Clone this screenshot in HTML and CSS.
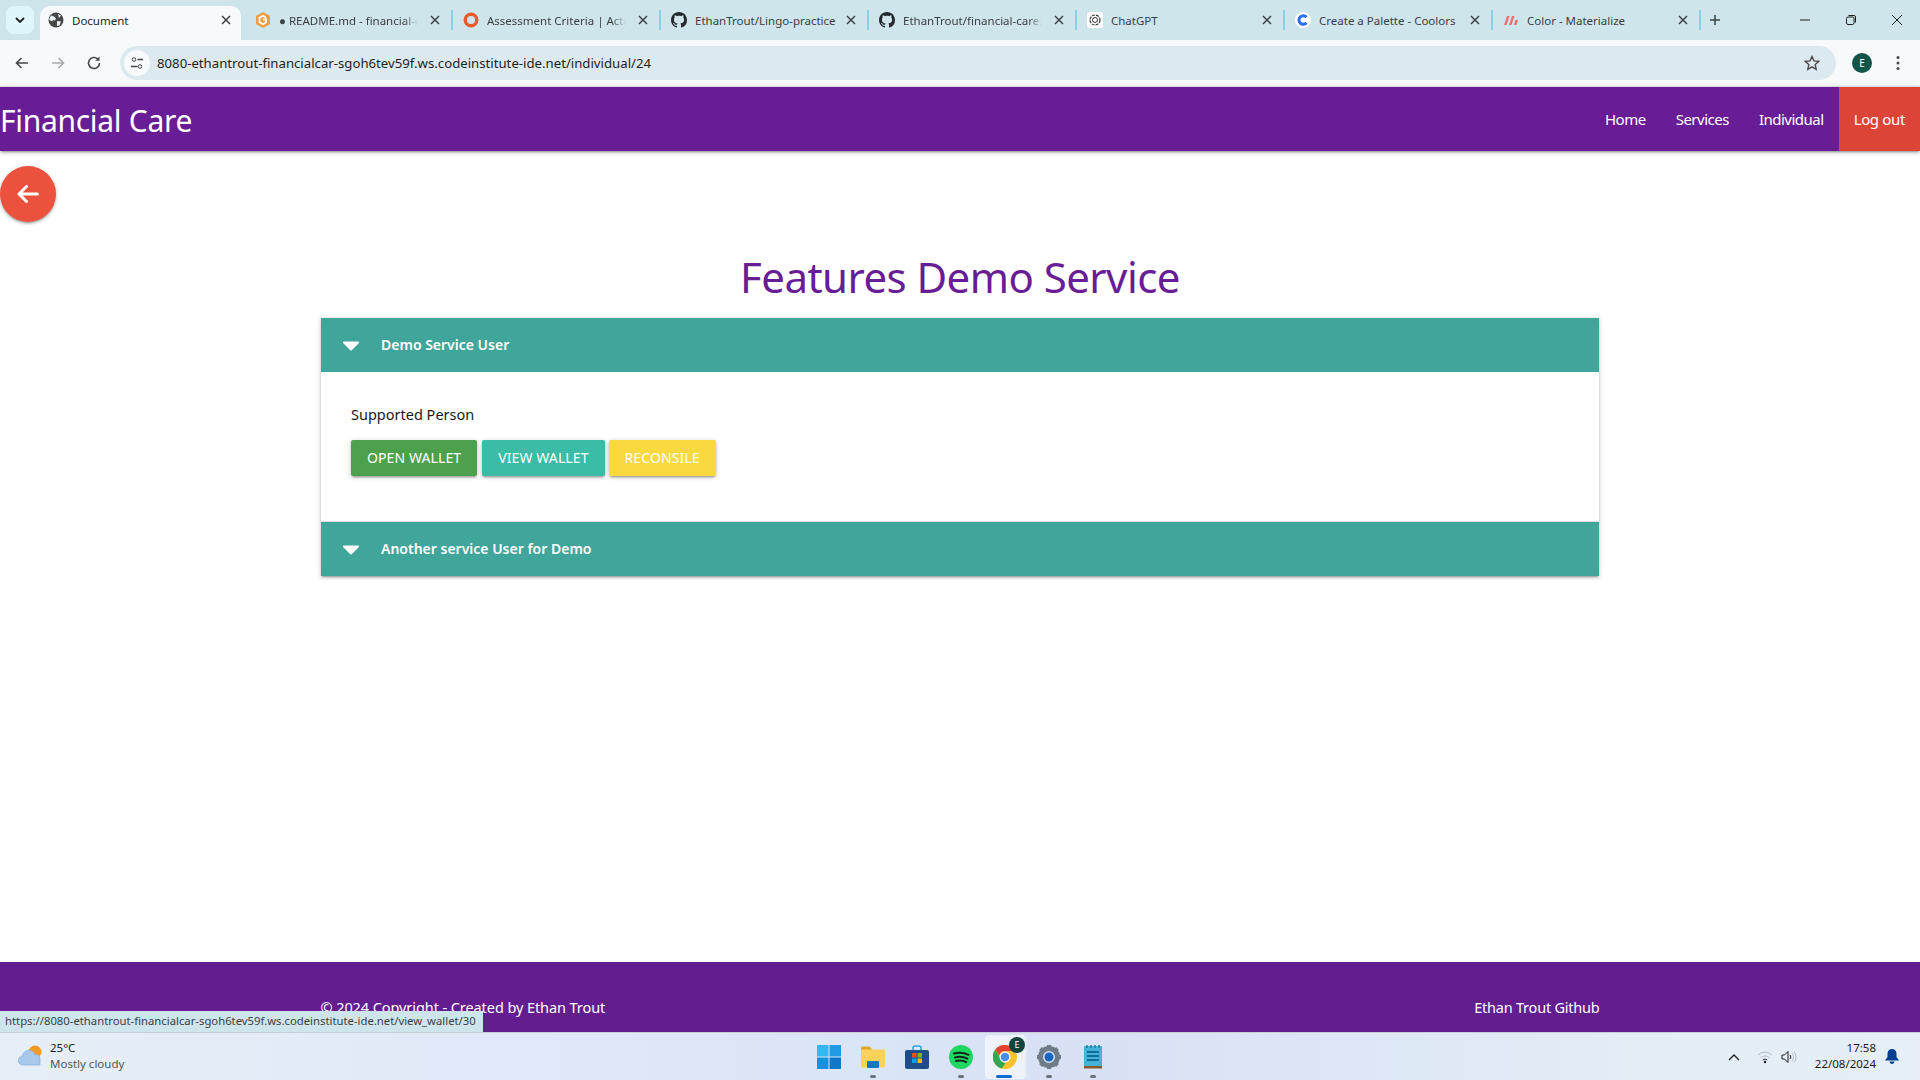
FILE: index.html
```html
<!DOCTYPE html>
<html lang="en">
<head>
  <meta charset="UTF-8" />
  <title>Document</title>
  <link rel="stylesheet" href="styles.css">
</head>
<body>

  <svg class="icon-defs" width="0" height="0">
    <symbol id="github" viewBox="0 0 16 16"><path fill="#24292f" d="M8 0C3.58 0 0 3.58 0 8c0 3.54 2.29 6.53 5.47 7.59.4.07.55-.17.55-.38 0-.19-.01-.82-.01-1.49-2.01.37-2.53-.49-2.69-.94-.09-.23-.48-.94-.82-1.13-.28-.15-.68-.52-.01-.53.63-.01 1.08.58 1.23.82.72 1.21 1.87.87 2.33.66.07-.52.28-.87.51-1.07-1.78-.2-3.64-.89-3.64-3.95 0-.87.31-1.59.82-2.15-.08-.2-.36-1.02.08-2.12 0 0 .67-.21 2.2.82.64-.18 1.32-.27 2-.27.68 0 1.36.09 2 .27 1.53-1.04 2.2-.82 2.2-.82.44 1.1.16 1.92.08 2.12.51.56.82 1.27.82 2.15 0 3.07-1.87 3.75-3.65 3.95.29.25.54.73.54 1.48 0 1.07-.01 1.93-.01 2.2 0 .21.15.46.55.38A8.013 8.013 0 0016 8c0-4.42-3.58-8-8-8z"/></symbol>
    <symbol id="close" viewBox="0 0 10 10"><path d="M1 1l8 8M9 1l-8 8" stroke="#3c4043" stroke-width="1.5" fill="none"/></symbol>
    <symbol id="caret" viewBox="0 0 16 10"><path d="M1 1.500h14L8 8.500z" fill="#fff" stroke="#fff" stroke-width="2" stroke-linejoin="round"/></symbol>
  </svg>

  <!-- Browser tabs -->
  <div class="tab-strip">
    <div class="tab-search"><svg width="10" height="6" viewBox="0 0 10 6"><path d="M1 1l4 4 4-4" stroke="#1f1f1f" stroke-width="1.800" fill="none"/></svg></div>
    <div class="tab tab-active">
      <svg class="tab-icon" viewBox="0 0 16 16"><circle cx="8" cy="8" r="7.500" fill="#444746"/><path d="M3 3.500l3 1 2 2-1 2-2-.5-1 1.500-3-2zM10 2l3 1.500-2 2.500zM9 9l4 .5-1.500 4-2.500.5z" fill="#e8f0f4"/></svg>
      <span class="tab-title">Document</span>
      <svg class="tab-close"><use href="#close"/></svg>
    </div>
    <div class="tab">
      <svg class="tab-icon" viewBox="0 0 16 16"><path d="M8 0l7 4v8l-7 4-7-4V4z" fill="#f29b3f"/><path d="M11 5.500L8 3.800 4.500 5.800v4.400L8 12.200l3-1.800V7.500H8" stroke="#fff" stroke-width="1.800" fill="none"/></svg>
      <span class="tab-title tab-title-cut">● README.md - financial-care</span>
      <svg class="tab-close"><use href="#close"/></svg>
    </div>
    <span class="tab-sep"></span>
    <div class="tab">
      <svg class="tab-icon" viewBox="0 0 16 16"><circle cx="8" cy="8" r="5.800" fill="none" stroke="#ef5a28" stroke-width="3.400"/></svg>
      <span class="tab-title tab-title-cut">Assessment Criteria | Active</span>
      <svg class="tab-close"><use href="#close"/></svg>
    </div>
    <span class="tab-sep"></span>
    <div class="tab">
      <svg class="tab-icon"><use href="#github"/></svg>
      <span class="tab-title">EthanTrout/Lingo-practice</span>
      <svg class="tab-close"><use href="#close"/></svg>
    </div>
    <span class="tab-sep"></span>
    <div class="tab">
      <svg class="tab-icon"><use href="#github"/></svg>
      <span class="tab-title tab-title-cut">EthanTrout/financial-care: A</span>
      <svg class="tab-close"><use href="#close"/></svg>
    </div>
    <span class="tab-sep"></span>
    <div class="tab">
      <svg class="tab-icon" viewBox="0 0 16 16"><rect width="16" height="16" rx="2" fill="#fff"/><circle cx="8" cy="8" r="5" fill="none" stroke="#333" stroke-width="1.200" stroke-dasharray="3 1"/><circle cx="8" cy="8" r="2.500" fill="none" stroke="#333"/></svg>
      <span class="tab-title">ChatGPT</span>
      <svg class="tab-close"><use href="#close"/></svg>
    </div>
    <span class="tab-sep"></span>
    <div class="tab">
      <svg class="tab-icon" viewBox="0 0 16 16"><circle cx="8" cy="8" r="8" fill="#fff"/><path d="M11.500 5.200a4.300 4.300 0 1 0 0 5.600" stroke="#2b6cf0" stroke-width="3" fill="none"/></svg>
      <span class="tab-title">Create a Palette - Coolors</span>
      <svg class="tab-close"><use href="#close"/></svg>
    </div>
    <span class="tab-sep"></span>
    <div class="tab">
      <svg class="tab-icon" viewBox="0 0 16 16"><path d="M1 13L4 4h2.500l-3 9zM6 13l3-9h2.500l-3 9zM11 13l1.500-5H15l-1.500 5z" fill="#ee6e73"/></svg>
      <span class="tab-title">Color - Materialize</span>
      <svg class="tab-close"><use href="#close"/></svg>
    </div>
    <span class="tab-sep"></span>
    <svg class="new-tab" width="12" height="12" viewBox="0 0 12 12"><path d="M6 1v10M1 6h10" stroke="#3c4043" stroke-width="1.500"/></svg>
    <div class="window-controls">
      <svg width="12" height="12" viewBox="0 0 12 12"><path d="M1 6h10" stroke="#1f1f1f"/></svg>
      <svg width="12" height="12" viewBox="0 0 12 12"><rect x="1.500" y="3" width="7.500" height="7.500" rx="1.500" fill="none" stroke="#1f1f1f"/><path d="M3.500 1.500H9A1.500 1.500 0 0 1 10.500 3v5.500" fill="none" stroke="#1f1f1f"/></svg>
      <svg width="12" height="12" viewBox="0 0 12 12"><path d="M1 1l10 10M11 1L1 11" stroke="#1f1f1f"/></svg>
    </div>
  </div>

  <!-- Browser toolbar -->
  <div class="toolbar">
    <svg class="tool" viewBox="0 0 16 16"><path d="M14 8H3M7.500 3L2.500 8l5 5" stroke="#474747" stroke-width="1.600" fill="none"/></svg>
    <svg class="tool" viewBox="0 0 16 16"><path d="M2 8h11M8.500 3l5 5-5 5" stroke="#a9acae" stroke-width="1.600" fill="none"/></svg>
    <svg class="tool" viewBox="0 0 16 16"><path d="M13.500 8A5.500 5.500 0 1 1 11.800 4" stroke="#474747" stroke-width="1.600" fill="none"/><path d="M13.500 1.500v4.200H9.300z" fill="#474747"/></svg>
    <div class="address-bar">
      <span class="site-info"><svg width="14" height="14" viewBox="0 0 14 14"><circle cx="4" cy="3.500" r="1.800" fill="none" stroke="#444"/><path d="M7.500 3.500H13M1 10.500h6.500" stroke="#444" stroke-width="1.300"/><circle cx="10" cy="10.500" r="1.800" fill="none" stroke="#444"/></svg></span>
      <span class="url">8080-ethantrout-financialcar-sgoh6tev59f.ws.codeinstitute-ide.net/individual/24</span>
      <svg class="star" width="16" height="16" viewBox="0 0 16 16"><path d="M8 1.500l2 4.400 4.700.5-3.500 3.200 1 4.700L8 11.900l-4.200 2.400 1-4.700L1.300 6.400 6 5.900z" fill="none" stroke="#474747" stroke-width="1.400"/></svg>
    </div>
    <span class="profile">E</span>
    <svg class="menu-dots" width="4" height="16" viewBox="0 0 4 16"><circle cx="2" cy="2.500" r="1.500" fill="#474747"/><circle cx="2" cy="8" r="1.500" fill="#474747"/><circle cx="2" cy="13.500" r="1.500" fill="#474747"/></svg>
  </div>

  <!-- Navigation Bar -->
  <nav class="site-nav">
    <a href="#" class="brand">Financial Care</a>
    <ul class="nav-links">
      <li><a href="#">Home</a></li>
      <li><a href="#">Services</a></li>
      <li><a href="#">Individual</a></li>
      <li><a href="#" class="logout">Log out</a></li>
    </ul>
  </nav>

  <main class="page">
    <a href="#" class="back-btn">
      <svg width="22" height="18" viewBox="0 0 22 18"><path d="M20.500 9H2M9.500 1.500L2 9l7.500 7.500" stroke="#fff" stroke-width="3" stroke-linecap="round" stroke-linejoin="round" fill="none"/></svg>
    </a>

    <h1 class="page-title">Features Demo Service</h1>

    <ul class="collapsible">
      <li>
        <div class="collapsible-header"><svg class="caret"><use href="#caret"/></svg>Demo Service User</div>
        <div class="collapsible-body">
          <p>Supported Person</p>
          <div class="btn-row">
            <a href="#" class="btn btn-green">Open Wallet</a>
            <a href="#" class="btn btn-teal">View Wallet</a>
            <a href="#" class="btn btn-yellow">Reconsile</a>
          </div>
        </div>
      </li>
      <li>
        <div class="collapsible-header"><svg class="caret"><use href="#caret"/></svg>Another service User for Demo</div>
      </li>
    </ul>
  </main>

  <footer class="site-footer">
    <div class="footer-inner">
      <span class="copyright">© 2024 Copyright - Created by Ethan Trout</span>
      <a href="#" class="github-link">Ethan Trout Github</a>
    </div>
  </footer>

  <!-- Link preview from the browser -->
  <div class="status-bubble">https://8080-ethantrout-financialcar-sgoh6tev59f.ws.codeinstitute-ide.net/view_wallet/30</div>

  <!-- Windows taskbar -->
  <div class="taskbar">
    <div class="weather">
      <svg width="26" height="24" viewBox="0 0 26 24"><circle cx="17" cy="8" r="6.500" fill="#f59a23"/><path d="M5 21a4.500 4.500 0 0 1-.5-9A6.500 6.500 0 0 1 17 10.500a4 4 0 0 1 5 4V21z" fill="#a9c8ee" stroke="#7ea6da" stroke-width=".6"/></svg>
      <div>
        <div class="temp">25°C</div>
        <div class="forecast">Mostly cloudy</div>
      </div>
    </div>

    <div class="task-icons">
      <span class="task-icon">
        <svg width="24" height="24" viewBox="0 0 24 24"><rect width="11.500" height="11.500" fill="#38b6f2"/><rect x="12.500" width="11.500" height="11.500" fill="#1f9be3"/><rect y="12.500" width="11.500" height="11.500" fill="#1a8fdb"/><rect x="12.500" y="12.500" width="11.500" height="11.500" fill="#0f78c9"/></svg>
      </span>
      <span class="task-icon running">
        <svg width="24" height="22" viewBox="0 0 24 22"><path d="M0 2a1.500 1.500 0 0 1 1.500-1.500h7L11 3v4H0z" fill="#e0a526"/><rect y="3.500" width="24" height="18" rx="1.500" fill="#fbd35c"/><rect x="6" y="15" width="12" height="7" rx="1" fill="#1279c4"/></svg>
      </span>
      <span class="task-icon">
        <svg width="24" height="24" viewBox="0 0 24 24"><path d="M8 6V3a2 2 0 0 1 2-2h4a2 2 0 0 1 2 2v3" fill="none" stroke="#2aa7e0" stroke-width="1.500"/><rect y="5" width="24" height="19" rx="2" fill="#1d4e89"/><rect x="7" y="8" width="4.500" height="4.500" fill="#f25022"/><rect x="12.500" y="8" width="4.500" height="4.500" fill="#7fba00"/><rect x="7" y="13.500" width="4.500" height="4.500" fill="#00a4ef"/><rect x="12.500" y="13.500" width="4.500" height="4.500" fill="#ffb900"/></svg>
      </span>
      <span class="task-icon running">
        <svg width="24" height="24" viewBox="0 0 24 24"><circle cx="12" cy="12" r="12" fill="#1ed760"/><path d="M5 8.500c5-1.400 10-1 14.500 1.300M6 12.500c4.300-1.100 8.500-.8 12.300 1.200M7 16c3.500-.8 7-.6 10 1" stroke="#14241a" stroke-width="2" stroke-linecap="round" fill="none"/></svg>
      </span>
      <span class="task-icon active">
        <svg width="24" height="24" viewBox="0 0 24 24"><circle cx="12" cy="12" r="12" fill="#fbc02d"/><path d="M12 0a12 12 0 0 1 10.400 6H12a6 6 0 0 0-5.800 4.500L2.300 4.500A12 12 0 0 1 12 0z" fill="#e5432f"/><path d="M2.300 4.500l5.200 9a6 6 0 0 0 5 4.500L8.800 23.600A12 12 0 0 1 2.300 4.500z" fill="#32a752"/><circle cx="12" cy="12" r="5.500" fill="#fff"/><circle cx="12" cy="12" r="4.300" fill="#4a8df0"/></svg>
        <span class="task-badge">E</span>
      </span>
      <span class="task-icon running">
        <svg width="24" height="24" viewBox="0 0 24 24"><path d="M12 12m-8.500 0a8.500 8.500 0 1 0 17 0a8.500 8.500 0 1 0-17 0" fill="none" stroke="#6f7b86" stroke-width="5"/><path d="M12 0v5M12 19v5M0 12h5M19 12h5M3.500 3.500l3.500 3.500M17 17l3.500 3.500M20.500 3.500L17 7M7 17l-3.500 3.500" stroke="#6f7b86" stroke-width="4"/><circle cx="12" cy="12" r="4.500" fill="#1667c2"/></svg>
      </span>
      <span class="task-icon running">
        <svg width="18" height="25" viewBox="0 0 18 25"><rect y="2" width="18" height="21" fill="#45b3d8"/><rect y="22" width="18" height="2.500" fill="#8a5a2b"/><path d="M3 1v3M7 1v3M11 1v3M15 1v3" stroke="#1d7fa6" stroke-width="1.500"/><path d="M3 8h12M3 12h12M3 16h12" stroke="#0f6f96" stroke-width="2"/></svg>
      </span>
    </div>

    <div class="tray">
      <svg width="12" height="8" viewBox="0 0 12 8"><path d="M1 7l5-5 5 5" stroke="#1f1f1f" stroke-width="1.300" fill="none"/></svg>
      <svg class="tray-wifi" width="16" height="14" viewBox="0 0 16 14"><path d="M1 5a10 10 0 0 1 14 0M3.500 7.800a6.500 6.500 0 0 1 9 0" stroke="#b5bcc4" fill="none"/><path d="M5.800 10a3.200 3.200 0 0 1 4.400 0" stroke="#1f1f1f" fill="none"/><circle cx="8" cy="12" r="1.200" fill="#1f1f1f"/></svg>
      <svg class="tray-sound" width="16" height="14" viewBox="0 0 16 14"><path d="M1 5h2.500L7 1.500v11L3.500 9H1z" fill="none" stroke="#1f1f1f"/><path d="M9 5a3 3 0 0 1 0 4" stroke="#1f1f1f" fill="none"/><path d="M11 3a6 6 0 0 1 0 8M13 1.500a8.500 8.500 0 0 1 0 11" stroke="#b5bcc4" fill="none"/></svg>
      <div class="clock">
        <div>17:58</div>
        <div>22/08/2024</div>
      </div>
      <svg class="bell" width="14" height="15" viewBox="0 0 14 15"><path d="M7 0a4.500 4.500 0 0 1 4.500 4.500V8L14 11.500H0L2.500 8V4.500A4.500 4.500 0 0 1 7 0z" fill="#003e92"/><path d="M4.500 12.500h5a2.500 2.500 0 0 1-5 0z" fill="#003e92"/></svg>
    </div>
  </div>

</body>
</html>
```

FILE: styles.css
```css
* {
  margin: 0;
  padding: 0;
  box-sizing: border-box;
}

html, body {
  height: 100%;
}

body {
  display: flex;
  flex-direction: column;
  height: 100vh;
  overflow: hidden;
  background-color: #fff;
  font-family: 'Noto Sans', 'Open Sans', sans-serif;
}

a {
  text-decoration: none;
  color: inherit;
}

ul {
  list-style: none;
}

.icon-defs {
  position: absolute;
}

/* Browser tabs */
.tab-strip {
  display: flex;
  align-items: center;
  flex-shrink: 0;
  height: 40px;
  padding-left: 6px;
  background-color: #cfe5ec;
}

.tab-search {
  display: flex;
  align-items: center;
  justify-content: center;
  width: 28px;
  height: 28px;
  margin-right: 2px;
  border-radius: 8px;
  background-color: #dff6fd;
}

.tab {
  display: flex;
  align-items: center;
  width: 206px;
  height: 40px;
  padding: 0 11px 0 10px;
  font-size: 11.500px;
  color: #3c4043;
}

.tab-active {
  width: 201px;
  height: 34px;
  margin: 0 4px;
  padding: 0 10px 6px 8px;
  align-self: flex-end;
  border-radius: 10px 10px 0 0;
  background-color: #f7fafc;
  color: #1f1f1f;
}

.tab-sep {
  flex-shrink: 0;
  width: 2px;
  height: 20px;
  background-color: #87d0e6;
}

.tab-icon {
  flex-shrink: 0;
  width: 16px;
  height: 16px;
  margin-right: 8px;
}

.tab-title {
  flex: 1;
  overflow: hidden;
  white-space: nowrap;
}

.tab-title-cut {
  margin-right: 4px;
  -webkit-mask-image: linear-gradient(to right, #000 90%, transparent);
  mask-image: linear-gradient(to right, #000 90%, transparent);
}

.tab-close {
  flex-shrink: 0;
  width: 10px;
  height: 10px;
  margin-left: 8px;
}

.new-tab {
  margin-left: 8px;
}

.window-controls {
  display: flex;
  gap: 34px;
  margin-left: auto;
  padding-right: 17px;
}

/* Browser toolbar */
.toolbar {
  display: flex;
  align-items: center;
  flex-shrink: 0;
  height: 47px;
  padding: 0 0 1px 14px;
  background-color: #f7fafc;
  border-bottom: 1px solid #e3e6e8;
}

.tool {
  width: 16px;
  height: 16px;
  margin-right: 20px;
}

.address-bar {
  display: flex;
  align-items: center;
  flex: 1;
  height: 34px;
  margin-left: -2px;
  padding: 0 16px 0 4px;
  border-radius: 17px;
  background-color: #dce9ee;
}

.site-info {
  display: flex;
  align-items: center;
  justify-content: center;
  width: 26px;
  height: 26px;
  margin-right: 7px;
  border-radius: 50%;
  background-color: #f7fafc;
}

.url {
  flex: 1;
  font-size: 13.200px;
  color: #1f1f1f;
}

.profile {
  display: flex;
  align-items: center;
  justify-content: center;
  width: 20px;
  height: 20px;
  margin: 0 24px 0 16px;
  border-radius: 50%;
  background-color: #10544a;
  color: #fff;
  font-size: 10px;
}

.menu-dots {
  margin-right: 20px;
}

/* Navigation Bar */
.site-nav {
  display: flex;
  align-items: center;
  justify-content: space-between;
  flex-shrink: 0;
  height: 64px;
  background-color: #681c95;
  box-shadow: 0 2px 2px 0 rgba(0, 0, 0, 0.14), 0 3px 1px -2px rgba(0, 0, 0, 0.12), 0 1px 5px 0 rgba(0, 0, 0, 0.2);
  color: #fff;
}

.brand {
  padding-top: 2px;
  font-size: 30px;
  letter-spacing: -0.3px;
}

.nav-links {
  display: flex;
  height: 100%;
}

.nav-links a {
  display: flex;
  align-items: center;
  height: 100%;
  padding: 0 15px;
  font-size: 15px;
  letter-spacing: -0.5px;
}

.nav-links .logout {
  background-color: #db4437;
  letter-spacing: -0.35px;
}

/* Main content */
.page {
  flex: 1;
  padding-top: 15px;
}

.back-btn {
  display: flex;
  align-items: center;
  justify-content: center;
  width: 56px;
  height: 56px;
  border-radius: 50%;
  background-color: #ec513d;
  box-shadow: 0 2px 2px 0 rgba(0, 0, 0, 0.14), 0 3px 1px -2px rgba(0, 0, 0, 0.12), 0 1px 5px 0 rgba(0, 0, 0, 0.2);
}

.page-title {
  margin-top: 26px;
  margin-bottom: 12px;
  text-align: center;
  font-size: 42px;
  font-weight: 400;
  line-height: 58px;
  letter-spacing: -0.55px;
  color: #681c95;
}

.collapsible {
  width: 1278px;
  margin: 0 auto;
  background-color: #fff;
  box-shadow: 0 2px 2px 0 rgba(0, 0, 0, 0.14), 0 3px 1px -2px rgba(0, 0, 0, 0.12), 0 1px 5px 0 rgba(0, 0, 0, 0.2);
}

.collapsible-header {
  display: flex;
  align-items: center;
  height: 54px;
  padding: 0 0 1px 22px;
  background-color: #40a59b;
  color: #fff;
  font-size: 14px;
  font-weight: 600;
}

.caret {
  width: 16px;
  height: 10px;
  margin: 3px 22px 0 0;
}

.collapsible-body {
  height: 150px;
  padding: 30px 30px 0;
  border-bottom: 1px solid #ddd;
}

.collapsible-body p {
  font-size: 14.500px;
  line-height: 24px;
  color: #1a1a1a;
}

.btn-row {
  display: flex;
  gap: 4px;
  margin-top: 14px;
}

.btn {
  display: block;
  height: 36px;
  padding: 0 16px;
  border-radius: 2px;
  color: #fff;
  font-size: 14px;
  letter-spacing: 0.1px;
  line-height: 36px;
  text-transform: uppercase;
  box-shadow: 0 2px 2px 0 rgba(0, 0, 0, 0.14), 0 3px 1px -2px rgba(0, 0, 0, 0.12), 0 1px 5px 0 rgba(0, 0, 0, 0.2);
}

.btn-green {
  margin-right: 1px;
  background-color: #4ea14c;
}

.btn-teal {
  background-color: #3bbca6;
}

.btn-yellow {
  background-color: #f9d93e;
}

/* Footer */
.site-footer {
  flex-shrink: 0;
  height: 70px;
  padding-top: 34px;
  background-color: #641d90;
  color: #fff;
  font-size: 14.500px;
  line-height: 22px;
}

.footer-inner {
  display: flex;
  justify-content: space-between;
  width: 1279px;
  margin: 0 auto;
}

.copyright {
  letter-spacing: -0.08px;
}

.github-link {
  letter-spacing: -0.22px;
}

.status-bubble {
  position: absolute;
  left: 0;
  bottom: 48px;
  width: 483px;
  height: 21px;
  padding-left: 5px;
  overflow: hidden;
  white-space: nowrap;
  background-color: #cfe5ec;
  color: #3c4043;
  font-size: 11.300px;
  line-height: 20px;
}

/* Windows taskbar */
.taskbar {
  display: grid;
  grid-template-columns: 1fr auto 1fr;
  align-items: center;
  flex-shrink: 0;
  height: 48px;
  background: linear-gradient(90deg, #e6eff7 0%, #dbe5f8 45%, #d8e1f5 55%, #e2edf6 85%, #e6eff6 100%);
  border-top: 1px solid #c9ced6;
}

.weather {
  display: flex;
  align-items: center;
  gap: 6px;
  padding: 0 0 2px 18px;
  font-size: 11.500px;
  line-height: 16px;
  color: #1a1a1a;
}

.forecast {
  color: #555;
}

.task-icons {
  display: flex;
  gap: 4px;
  padding-left: 2px;
}

.task-icon {
  position: relative;
  display: flex;
  align-items: center;
  justify-content: center;
  width: 40px;
  height: 44px;
  border-radius: 4px;
}

.task-icon.running::after,
.task-icon.active::after {
  content: "";
  position: absolute;
  bottom: 1px;
  left: 17px;
  width: 6px;
  height: 3px;
  border-radius: 2px;
  background-color: #6d7480;
}

.task-icon.active {
  background-color: #eef2fb;
  box-shadow: 2px 0 0 #e3e9f7;
}

.task-icon.active::after {
  left: 11px;
  width: 16px;
  background-color: #0a6cd6;
}

.task-badge {
  position: absolute;
  top: 2px;
  right: 0;
  width: 16px;
  height: 16px;
  border-radius: 50%;
  background-color: #10453e;
  color: #fff;
  font-size: 9px;
  line-height: 16px;
  text-align: center;
}

.tray {
  display: flex;
  align-items: center;
  justify-content: flex-end;
  padding-right: 21px;
  color: #1a1a1a;
}

.tray-wifi {
  margin-left: 17px;
}

.tray-sound {
  margin-left: 8px;
}

.clock {
  margin-left: 18px;
  padding-bottom: 2px;
  font-size: 11.500px;
  line-height: 16px;
  text-align: right;
}

.bell {
  margin-left: 9px;
}
```
